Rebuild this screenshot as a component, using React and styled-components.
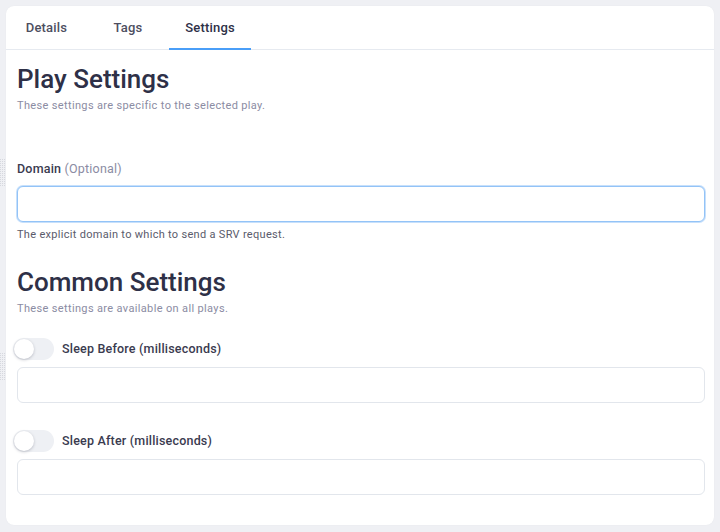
import { createGlobalStyle, styled } from 'styled-components';

const tabs = [
  { name: 'Details', width: 81 },
  { name: 'Tags', width: 82 },
  { name: 'Settings', width: 82 },
];

function App() {
  return (
    <Page>
      <GlobalStyle />
      <Handle style={{ top: 158 }} />
      <Handle style={{ top: 352 }} />
      <Card>
        <TabBar>
          {tabs.map((t) => (
            <Tab key={t.name} $w={t.width} $active={t.name === 'Settings'}>{t.name}</Tab>
          ))}
        </TabBar>
        <Body>
          <Heading>Play Settings</Heading>
          <Sub>These settings are specific to the selected play.</Sub>

          <Field $top={47}>
            <Label>Domain <Muted>(Optional)</Muted></Label>
            <Input $focus />
            <Help>The explicit domain to which to send a SRV request.</Help>
          </Field>

          <Heading $top={24}>Common Settings</Heading>
          <Sub>These settings are available on all plays.</Sub>

          <Field $top={21}>
            <ToggleRow>
              <Switch />
              <Label>Sleep Before (milliseconds)</Label>
            </ToggleRow>
            <Input />
          </Field>

          <Field $top={27}>
            <ToggleRow>
              <Switch />
              <Label>Sleep After (milliseconds)</Label>
            </ToggleRow>
            <Input />
          </Field>
        </Body>
      </Card>
    </Page>
  );
}

const GlobalStyle = createGlobalStyle`
  * {
    margin: 0;
    padding: 0;
    box-sizing: border-box;
  }
  body {
    background: #eff0f4;
    font-family: Roboto, 'Noto Sans', sans-serif;
  }
`;

const Page = styled.div`
  position: relative;
  width: 720px;
  height: 532px;
  padding: 6px 6px 7px 6px;
  background: #eff0f4;
  overflow: hidden;
`;

const Handle = styled.div`
  position: absolute;
  left: 0;
  width: 5px;
  height: 28px;
  background-image:
    repeating-linear-gradient(90deg, transparent 0 1px, #eff0f4 1px 2px),
    repeating-linear-gradient(0deg, #d6d8de 0 1px, #eff0f4 1px 2px);
`;

const Card = styled.div`
  height: 100%;
  background: #ffffff;
  border-radius: 8px;
  box-shadow: 0 0 1px rgba(40, 45, 70, 0.08);
  overflow: hidden;
`;

const TabBar = styled.div`
  display: flex;
  height: 44px;
  border-bottom: 1px solid #e6eaf0;
`;

const Tab = styled.div`
  width: ${(p) => p.$w}px;
  display: flex;
  align-items: center;
  justify-content: center;
  padding-top: 1px;
  font-size: 13px;
  font-weight: 500;
  letter-spacing: 0.2px;
  color: ${(p) => (p.$active ? '#2e3047' : '#4d4e5f')};
  border-bottom: 2px solid ${(p) => (p.$active ? '#4a9ef8' : 'transparent')};
  margin-bottom: -1px;
`;

const Body = styled.div`
  padding: 13px 9px 0 11px;
  display: flex;
  flex-direction: column;
`;

const Heading = styled.h1`
  margin-top: ${(p) => p.$top || 0}px;
  margin-bottom: 2px;
  font-size: 26px;
  line-height: 33px;
  font-weight: 500;
  color: #2e3047;
`;

const Sub = styled.p`
  font-size: 11px;
  line-height: 16px;
  color: #8b8ca3;
  letter-spacing: 0.35px;
`;

const Field = styled.div`
  margin-top: ${(p) => p.$top}px;
  display: flex;
  flex-direction: column;
`;

const Label = styled.label`
  font-size: 12.5px;
  line-height: 16px;
  font-weight: 500;
  color: #3a3b4f;
  letter-spacing: 0.2px;
`;

const Muted = styled.span`
  font-weight: 400;
  color: #8b8ca3;
`;

const Input = styled.div`
  margin-top: ${(p) => (p.$focus ? 9 : 7)}px;
  height: 36px;
  border-radius: 6px;
  border: 1px solid ${(p) => (p.$focus ? '#93c3f7' : '#e2e6ec')};
  box-shadow: ${(p) => (p.$focus ? '0 0 0 1px #c7e0fb' : 'none')};
  background: #ffffff;
`;

const Help = styled.p`
  margin-top: 6px;
  font-size: 11px;
  line-height: 14px;
  color: #5a5b6b;
  letter-spacing: 0.3px;
`;

const ToggleRow = styled.div`
  display: flex;
  align-items: center;
  gap: 8px;
  height: 22px;
  margin-left: -4px;
`;

const Switch = styled.div`
  position: relative;
  width: 41px;
  height: 22px;
  border-radius: 11px;
  background: #eef0f4;

  &::after {
    content: '';
    position: absolute;
    left: 1px;
    top: 1px;
    width: 20px;
    height: 20px;
    border-radius: 50%;
    background: #ffffff;
    box-shadow: 0 1px 3px rgba(30, 35, 60, 0.25);
  }
`;

export default App;
